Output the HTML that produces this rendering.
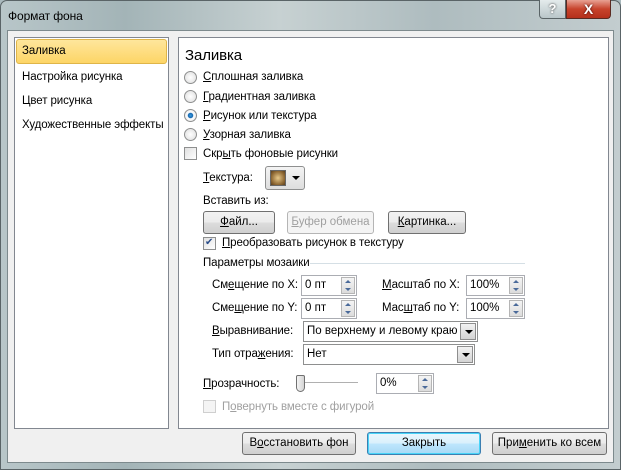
<!DOCTYPE html>
<html><head><meta charset="utf-8"><style>
*{box-sizing:border-box;margin:0;padding:0}
body{width:621px;height:470px;overflow:hidden;background:#a9b9bd;font-family:"Liberation Sans","DejaVu Sans",sans-serif;font-size:11px;color:#000;position:relative}
.a{position:absolute}
.frame{left:0;top:0;width:621px;height:470px;border-radius:7px 7px 0 0;background:linear-gradient(90deg,#b8c6c9,#a3b4b7 20%,#c7d1d2 45%,#aebcbf 70%,#c3cdcf);border:1px solid #5a6467}
.client{left:7px;top:30px;width:607px;height:433px;background:#f0f0f0;border:1px solid #7d8a8d}
.panel{background:#fff;border:1px solid #828790}
.t{position:absolute;white-space:nowrap;font-size:11.5px;line-height:14px;letter-spacing:-0.1px}
u{text-decoration:underline}
.btn{position:absolute;height:23px;border:1px solid #707070;border-radius:3px;background:linear-gradient(#f2f2f2 0,#ebebeb 50%,#dddddd 51%,#cfcfcf);text-align:center;line-height:20px;font-size:11.5px}
.radio{position:absolute;width:13px;height:13px;border-radius:50%;border:1px solid #8e8f8f;background:radial-gradient(#fff,#dcdcdc)}
.cb{position:absolute;width:13px;height:13px;border:1px solid #8e8f8f;background:linear-gradient(135deg,#e0e0e0,#fff)}
.inp{position:absolute;height:21px;background:#fff;border:1px solid #abadb3;font-size:11.5px;line-height:18px;padding-left:3px;white-space:nowrap;overflow:hidden}
.spin{position:absolute;right:1px;top:1px;width:14px;height:17px;background:linear-gradient(#f4f4f4,#dcdcdc);border:1px solid #b5b5b5}
.spin:before{content:"";position:absolute;left:3px;top:2px;border:3px solid transparent;border-bottom:3px solid #4a6a9a;border-top:0}
.spin:after{content:"";position:absolute;left:3px;top:10px;border:3px solid transparent;border-top:3px solid #4a6a9a;border-bottom:0}
.dd{position:absolute;right:1px;top:1px;width:16px;height:17px;border:1px solid #8e8e8e;background:linear-gradient(#f2f2f2,#d4d4d4)}
.dd:after{content:"";position:absolute;left:4px;top:6px;border:4px solid transparent;border-top:4px solid #000;border-bottom:0}
</style></head><body>
<div class="a frame"></div>
<div class="t" style="left:8px;top:9px;font-size:12px">Формат фона</div>
<div class="a" style="left:539px;top:0;width:27px;height:19px;border:1px solid #5a6467;border-top:0;border-radius:0 0 0 4px;background:linear-gradient(#e4ebec,#b9c6c9);text-align:center;color:#fff;font-weight:bold;font-size:13px;line-height:18px;text-shadow:0 0 2px #333">?</div>
<div class="a" style="left:566px;top:0;width:45px;height:19px;border:1px solid #5a2a22;border-top:0;border-radius:0 0 4px 0;background:linear-gradient(#e8a193,#c7432c 50%,#b5301b);text-align:center;color:#fff;font-weight:bold;font-size:14px;line-height:18px;text-shadow:0 0 2px #300">X</div>
<div class="a client"></div>
<div class="a panel" style="left:14px;top:37px;width:155px;height:392px"></div>
<div class="a" style="left:16px;top:39px;width:151px;height:25px;border:1px solid #dfb549;border-radius:3px;background:linear-gradient(#fee69c,#fdd566)"></div>
<div class="t" style="left:22px;top:44px">Заливка</div>
<div class="t" style="left:22px;top:70px">Настройка рисунка</div>
<div class="t" style="left:22px;top:94px">Цвет рисунка</div>
<div class="t" style="left:22px;top:118px">Художественные эффекты</div>
<div class="a panel" style="left:178px;top:37px;width:431px;height:392px"></div>
<div class="t" style="left:185px;top:47px;font-size:15px;line-height:18px">Заливка</div>
<div class="radio" style="left:184px;top:71px"></div><div class="t" style="left:203px;top:70px"><u>С</u>плошная заливка</div>
<div class="radio" style="left:184px;top:90px"></div><div class="t" style="left:203px;top:90px"><u>Г</u>радиентная заливка</div>
<div class="radio" style="left:184px;top:109px;background:radial-gradient(#3d9de0 0,#1467b0 30%,#fff 40%,#dcdcdc)"></div><div class="t" style="left:203px;top:109px"><u>Р</u>исунок или текстура</div>
<div class="radio" style="left:184px;top:128px"></div><div class="t" style="left:203px;top:128px"><u>У</u>зорная заливка</div>
<div class="cb" style="left:184px;top:147px"></div><div class="t" style="left:203px;top:147px">Скр<u>ы</u>ть фоновые рисунки</div>
<div class="t" style="left:203px;top:171px"><u>Т</u>екстура:</div>
<div class="a" style="left:265px;top:166px;width:40px;height:24px;border:1px solid #8e8f8f;border-radius:3px;background:linear-gradient(#f4f4f4,#dedede)"></div>
<div class="a" style="left:270px;top:170px;width:16px;height:16px;border:1px solid #666;background:radial-gradient(#e8c98a,#8a6430 70%,#5a4020)"></div>
<div class="a" style="left:292px;top:176px;border:4px solid transparent;border-top:4px solid #000;border-bottom:0"></div>
<div class="t" style="left:203px;top:194px">Вставить из:</div>
<div class="btn" style="left:203px;top:211px;width:72px"><u>Ф</u>айл...</div>
<div class="btn" style="left:287px;top:211px;width:87px;border-color:#b5b5b5;background:#f4f4f4;color:#a0a0a0"><u>Б</u>уфер обмена</div>
<div class="btn" style="left:388px;top:211px;width:78px"><u>К</u>артинка...</div>
<div class="cb" style="left:203px;top:237px"></div><div class="t" style="left:205px;top:236px;color:#2a4d8a;font-size:10px">✔</div>
<div class="t" style="left:222px;top:236px"><u>П</u>реобразовать рисунок в текстуру</div>
<div class="t" style="left:203px;top:256px">Параметры мозаики</div>
<div class="a" style="left:310px;top:263px;width:215px;height:1px;background:#d5dfe5"></div>
<div class="t" style="left:212px;top:278px">См<u>е</u>щение по X:</div>
<div class="inp" style="left:301px;top:275px;width:56px">0 пт<div class="spin"></div></div>
<div class="t" style="left:382px;top:278px"><u>М</u>асштаб по X:</div>
<div class="inp" style="left:466px;top:275px;width:59px">100%<div class="spin"></div></div>
<div class="t" style="left:212px;top:301px">Сме<u>щ</u>ение по Y:</div>
<div class="inp" style="left:301px;top:298px;width:56px">0 пт<div class="spin"></div></div>
<div class="t" style="left:382px;top:301px">Мас<u>ш</u>таб по Y:</div>
<div class="inp" style="left:466px;top:298px;width:59px">100%<div class="spin"></div></div>
<div class="t" style="left:212px;top:324px"><u>В</u>ыравнивание:</div>
<div class="inp" style="left:303px;top:321px;width:175px;border-color:#8e8f8f">По верхнему и левому краю<div class="dd"></div></div>
<div class="t" style="left:212px;top:347px">Тип отра<u>ж</u>ения:</div>
<div class="inp" style="left:303px;top:344px;width:172px;border-color:#8e8f8f">Нет<div class="dd"></div></div>
<div class="t" style="left:203px;top:377px"><u>П</u>розрачность:</div>
<div class="a" style="left:300px;top:382px;width:58px;height:2px;background:#b0b0b0;border-bottom:1px solid #fff"></div>
<div class="a" style="left:296px;top:375px;width:9px;height:17px;border:1px solid #707070;border-radius:2px 2px 5px 5px;background:linear-gradient(90deg,#f4f4f4,#d4d4d4)"></div>
<div class="inp" style="left:376px;top:373px;width:58px">0%<div class="spin"></div></div>
<div class="cb" style="left:203px;top:400px;border-color:#cfcfcf;background:#f4f4f4"></div>
<div class="t" style="left:222px;top:400px;color:#a0a0a0">П<u>о</u>вернуть вместе с фигурой</div>
<div class="btn" style="left:242px;top:432px;width:114px">В<u>о</u>сстановить фон</div>
<div class="btn" style="left:367px;top:432px;width:114px;border-color:#3c7fb1;box-shadow:inset 0 0 0 1px #48d4f8;background:linear-gradient(#eaf6fd,#d9f0fc 50%,#bee6fd 51%,#a7d9f5)">Закрыть</div>
<div class="btn" style="left:492px;top:432px;width:115px">При<u>м</u>енить ко всем</div>
</body></html>
